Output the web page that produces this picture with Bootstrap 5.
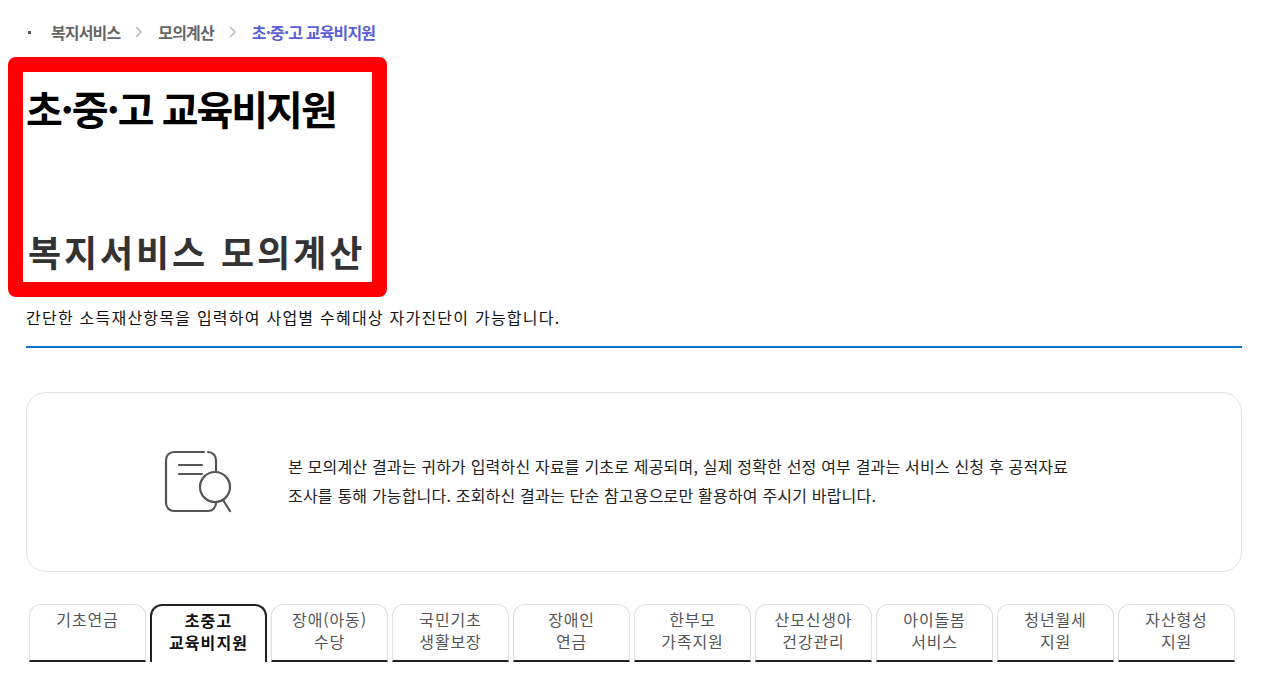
<!DOCTYPE html>
<html lang="ko"><head><meta charset="utf-8"><title>초·중·고 교육비지원</title>
<link href="https://cdn.jsdelivr.net/npm/bootstrap@5.3.0/dist/css/bootstrap.min.css" rel="stylesheet">
<style>
html,body{height:679px;overflow:hidden}
body{font-family:"Noto Sans CJK KR","Liberation Sans",sans-serif;color:#111;background:#fff}
.pg{padding:0 23px 0 26px}
.crumbs{height:57px;font-size:16px;font-weight:700;letter-spacing:-.85px;color:#666;padding-top:7px;line-height:22px}
.dotm{width:3px;height:3px;background:#555;margin:0 20px 0 2px}
.crumbs svg{margin:0 15px}
.cur{color:#5a5fd6}
.hl{margin-left:-18px;width:379px;height:240px;border:15px solid #f00;border-radius:8px;padding-left:3px}
.t1{font-size:40px;font-weight:700;color:#000;letter-spacing:-2px;line-height:50px;margin:11px 0 0}
.t2{font-size:36px;font-weight:700;color:#333;letter-spacing:2.9px;line-height:50px;margin:93px 0 0 2px}
.sub{font-size:16px;letter-spacing:1.23px;line-height:22px;padding:9px 0 18px;border-bottom:2px solid #0b76cc;margin:0}
.notice{margin-top:44px;height:180px;border:1px solid #e2e2e2;border-radius:20px;padding-left:136px}
.notice svg{flex:none;margin-right:55px}
.notice p{margin:0 0 2px;font-size:16px;line-height:29px;letter-spacing:.19px;width:820px;color:#222}
.tabs{margin-top:32px;padding-left:3px;gap:4px}
.tabx{width:117px;height:58px;border:1px solid #ddd;border-bottom:2px solid #222;border-radius:12px 12px 0 0;font-size:16px;letter-spacing:.85px;line-height:22px;text-align:center;color:#555;padding-top:3px}
.tabx.on{border:2px solid #222;border-bottom:0;font-weight:700;color:#111;padding-top:3px;letter-spacing:1.1px}
</style></head><body>
<div class="pg">
<nav class="crumbs d-flex align-items-center">
<span class="dotm"></span><span>복지서비스</span>
<svg width="8" height="12" viewBox="0 0 8 12"><path d="M1 1l5 5-5 5" fill="none" stroke="#bbb" stroke-width="1.6"/></svg>
<span>모의계산</span>
<svg width="8" height="12" viewBox="0 0 8 12"><path d="M1 1l5 5-5 5" fill="none" stroke="#bbb" stroke-width="1.6"/></svg>
<span class="cur">초·중·고 교육비지원</span>
</nav>
<div class="hl">
<h1 class="t1">초·중·고 교육비지원</h1>
<h2 class="t2">복지서비스 모의계산</h2>
</div>
<p class="sub">간단한 소득재산항목을 입력하여 사업별 수혜대상 자가진단이 가능합니다.</p>
<div class="notice d-flex align-items-center">
<svg width="70" height="66" viewBox="0 0 70 66" fill="none" stroke="#555" stroke-width="2.2" stroke-linecap="round"><path d="M41 3H11a8 8 0 0 0-8 8v43a8 8 0 0 0 8 8h34a8 8 0 0 0 8-8"/><path d="M45 3a8 8 0 0 1 8 8v12"/><path d="M16 16h23M16 25h23"/><circle cx="52" cy="38" r="15"/><path d="M60 51l7 11"/></svg>
<p>본 모의계산 결과는 귀하가 입력하신 자료를 기초로 제공되며, 실제 정확한 선정 여부 결과는 서비스 신청 후 공적자료<br>조사를 통해 가능합니다. 조회하신 결과는 단순 참고용으로만 활용하여 주시기 바랍니다.</p>
</div>
<div class="tabs d-flex">
<div class="tabx">기초연금</div>
<div class="tabx on">초중고<br>교육비지원</div>
<div class="tabx">장애(아동)<br>수당</div>
<div class="tabx">국민기초<br>생활보장</div>
<div class="tabx">장애인<br>연금</div>
<div class="tabx">한부모<br>가족지원</div>
<div class="tabx">산모신생아<br>건강관리</div>
<div class="tabx">아이돌봄<br>서비스</div>
<div class="tabx">청년월세<br>지원</div>
<div class="tabx">자산형성<br>지원</div>
</div>
</div>
</body></html>
